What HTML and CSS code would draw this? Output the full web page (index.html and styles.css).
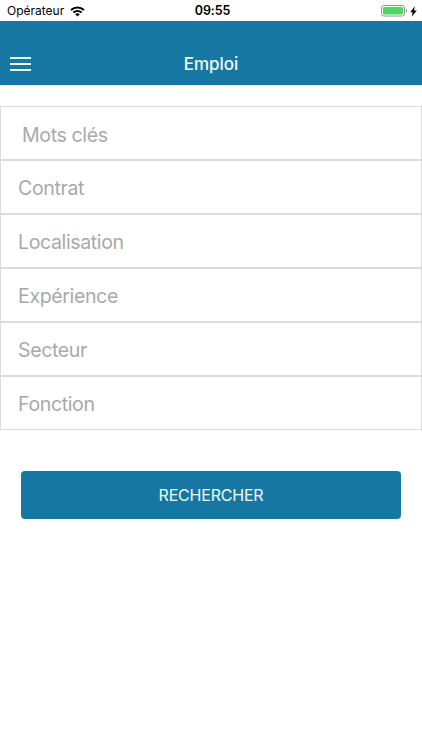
FILE: index.html
```html
<!DOCTYPE html>
<html lang="fr">
<head>
<meta charset="utf-8">
<title>Emploi</title>
<link rel="stylesheet" href="styles.css">
</head>
<body>
<div class="status">
  <div class="status-left">
    <span class="carrier">Opérateur</span>
    <svg class="wifi" width="15" height="11" viewBox="0 0 15 11">
      <g fill="none" stroke="#000" stroke-width="2">
        <path d="M1 4.1C4.8 .5 10.2 .5 14 4.1"/>
        <path d="M3.4 6.6C5.8 4.4 9.2 4.4 11.6 6.6"/>
      </g>
      <path d="M7.5 10.6L5.2 8.2Q7.5 6.5 9.8 8.2Z"/>
    </svg>
  </div>
  <time class="clock">09:55</time>
  <div class="status-right">
    <svg width="27" height="12" viewBox="0 0 27 12">
      <rect x=".5" y=".5" width="23" height="10.5" rx="2.3" fill="#fff" stroke="#929292"/>
      <rect x="2" y="2" width="20" height="7.5" rx="1" fill="#4cd964"/>
      <path d="M25 4v3.6q1.2-.5 1.2-1.8T25 4Z" fill="#929292"/>
    </svg>
    <svg width="7" height="11" viewBox="0 0 7 11"><path d="M4.8 .2L.2 6.3H2.7L1.8 10.8L6.8 4.5H4Z"/></svg>
  </div>
</div>
<header class="header">
  <button class="menu" aria-label="Menu"><span></span><span></span><span></span></button>
  <h1 class="title">Emploi</h1>
</header>
<main>
  <form class="form">
    <div class="field field-input">Mots clés</div>
    <div class="field">Contrat</div>
    <div class="field">Localisation</div>
    <div class="field">Expérience</div>
    <div class="field">Secteur</div>
    <div class="field">Fonction</div>
  </form>
  <button class="search">RECHERCHER</button>
</main>
</body>
</html>
```
FILE: styles.css
```css
* { box-sizing: border-box; }
body {
  margin: 0;
  background: #fff;
  font-family: Inter, "Liberation Sans", sans-serif;
  color: #000;
}
button { border: 0; padding: 0; font-family: inherit; }
.status {
  height: 21px;
  display: grid;
  grid-template-columns: 1fr auto 1fr;
  align-items: center;
  padding: 1px 5px 0 7px;
}
.status-left, .status-right { display: flex; align-items: center; }
.status-left { gap: 6px; }
.status-right { justify-content: flex-end; gap: 2px; }
.carrier { font-size: 12px; letter-spacing: 0; line-height: 20px; }
.clock { padding-left: 1px; font-size: 12.5px; font-weight: 600; letter-spacing: -0.1px; line-height: 20px; }
.header {
  height: 64px;
  background: #1678a2;
  display: grid;
  grid-template-columns: 1fr auto 1fr;
  align-items: end;
  padding: 0 10px 9px;
}
.menu {
  width: 21px;
  height: 25px;
  background: none;
  display: flex;
  flex-direction: column;
  justify-content: center;
  gap: 4px;
}
.menu span { height: 2px; background: #e9f9ff; }
.title {
  margin: 0;
  font-size: 17px;
  line-height: 24px;
  font-weight: 500;
  color: #f0fbff;
}
.form { padding-top: 21px; }
.field {
  height: 54px;
  border: 1px solid #dcdcdc;
  padding-left: 17px;
  line-height: 55px;
  font-size: 19.6px;
  letter-spacing: -0.4px;
  color: #a9a9a9;
}
.field-input { padding-left: 21px; line-height: 57px; }
.search {
  display: block;
  width: 380px;
  height: 48px;
  margin: 41px auto 0;
  border-radius: 4px;
  background: #1678a2;
  color: #f0fbff;
  font-size: 16px;
  letter-spacing: -0.2px;
}
```
